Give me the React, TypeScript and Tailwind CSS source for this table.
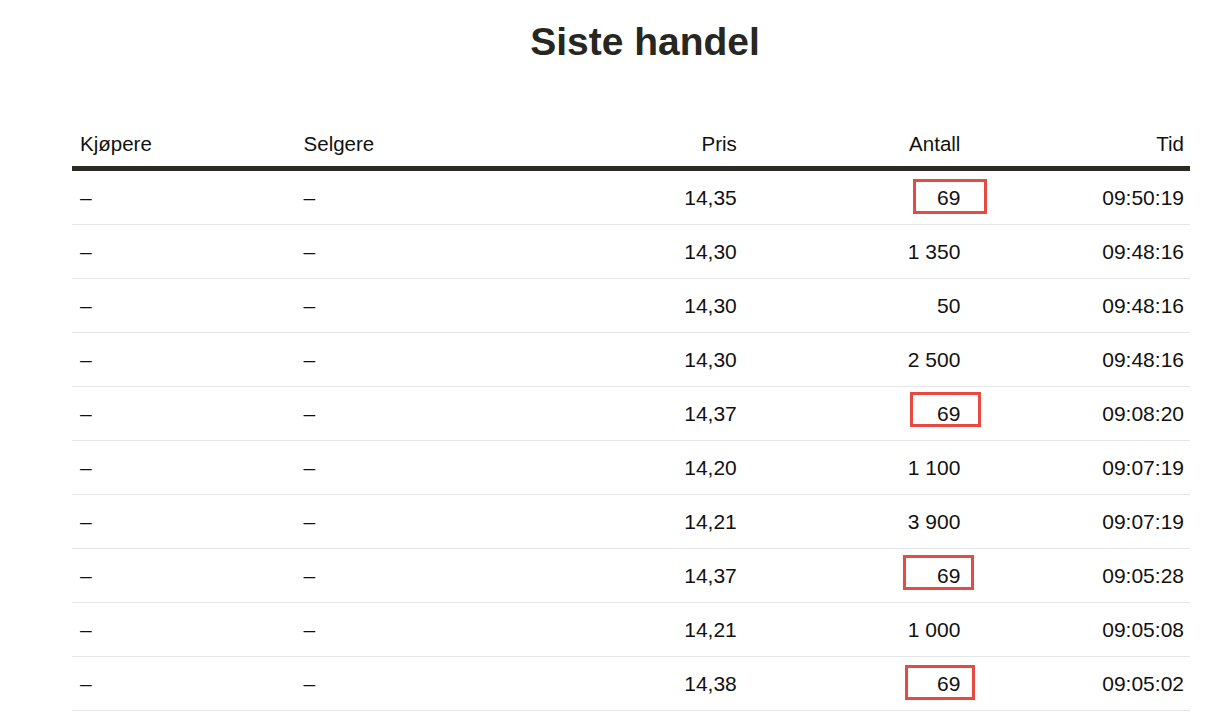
import React from 'react';

interface Trade {
  buyer: string;
  seller: string;
  price: string;
  qty: string;
  time: string;
  mark?: string;
}

// red highlight frames drawn over the "69" rows
const trades: Trade[] = [
  { buyer: '–', seller: '–', price: '14,35', qty: '69', time: '09:50:19', mark: 'top-[8px] left-[841px] w-[74px]' },
  { buyer: '–', seller: '–', price: '14,30', qty: '1 350', time: '09:48:16' },
  { buyer: '–', seller: '–', price: '14,30', qty: '50', time: '09:48:16' },
  { buyer: '–', seller: '–', price: '14,30', qty: '2 500', time: '09:48:16' },
  { buyer: '–', seller: '–', price: '14,37', qty: '69', time: '09:08:20', mark: 'top-[5px] left-[838px] w-[71px]' },
  { buyer: '–', seller: '–', price: '14,20', qty: '1 100', time: '09:07:19' },
  { buyer: '–', seller: '–', price: '14,21', qty: '3 900', time: '09:07:19' },
  { buyer: '–', seller: '–', price: '14,37', qty: '69', time: '09:05:28', mark: 'top-[6px] left-[831px] w-[71px]' },
  { buyer: '–', seller: '–', price: '14,21', qty: '1 000', time: '09:05:08' },
  { buyer: '–', seller: '–', price: '14,38', qty: '69', time: '09:05:02', mark: 'top-[8px] left-[833px] w-[70px]' },
];

export default function App() {
  return (
    <div
      className="min-h-[713px] bg-white text-[#111] pt-[18px]"
      style={{ fontFamily: '"Liberation Sans", Arial, sans-serif' }}
    >
      <h1 className="text-center text-[39px] leading-[48px] font-bold text-[#28271f] pl-[58px]">
        Siste handel
      </h1>

      <div className="mx-[72px] mt-[64px] w-[1118px]">
        <div className="grid grid-cols-5 border-b-[5px] border-[#2b2a24] text-[20.5px] leading-[28px]">
          <div className="pl-2 pb-[8px]">Kjøpere</div>
          <div className="pl-2 pb-[8px]">Selgere</div>
          <div className="pr-[6px] pb-[8px] text-right">Pris</div>
          <div className="pr-[6px] pb-[8px] text-right">Antall</div>
          <div className="pr-[6px] pb-[8px] text-right">Tid</div>
        </div>

        {trades.map((t, i) => (
          <div
            key={i}
            className="relative grid grid-cols-5 h-[54px] items-center border-b border-[#e6e6e6] text-[21px] leading-[28px]"
          >
            <div className="pl-2">{t.buyer}</div>
            <div className="pl-2">{t.seller}</div>
            <div className="pr-[6px] text-right">{t.price}</div>
            <div className="pr-[6px] text-right">{t.qty}</div>
            <div className="pr-[6px] text-right">{t.time}</div>
            {t.mark && (
              <div className={`absolute h-[35px] border-[3px] border-[#e64a40] ${t.mark}`} />
            )}
          </div>
        ))}
      </div>
    </div>
  );
}
